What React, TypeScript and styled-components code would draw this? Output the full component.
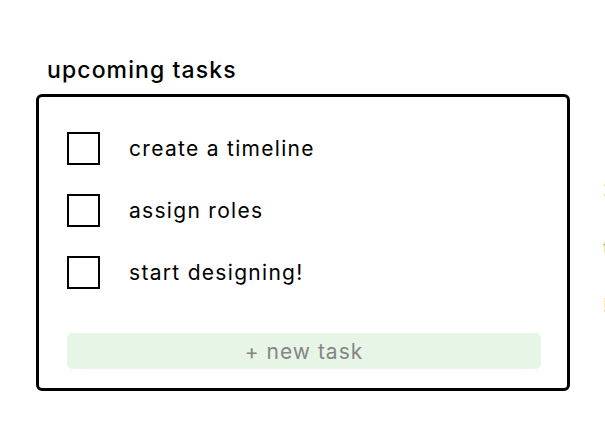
import React from "react";
import styled, { createGlobalStyle } from "styled-components";

const Global = createGlobalStyle`
  html, body { margin: 0; padding: 0; background: #fff; overflow: hidden; }
  body { font-family: "Inter", "Noto Sans", sans-serif; color: #000; }
`;

const Page = styled.div`
  display: flex;
  align-items: flex-start;
  padding: 54px 0 0 36px;
  width: 605px;
  height: 445px;
  box-sizing: border-box;
  overflow: hidden;
`;

const Column = styled.div`
  display: flex;
  flex-direction: column;
  flex-shrink: 0;
`;

const Title = styled.h2`
  margin: 0 0 8px 11px;
  font-size: 23px;
  font-weight: 500;
  line-height: 32px;
  letter-spacing: 1.1px;
`;

const Card = styled.div`
  width: 534px;
  height: 297px;
  box-sizing: border-box;
  border: 3px solid #000;
  border-radius: 6px;
  padding: 35px 26px 19px 28px;
  display: flex;
  flex-direction: column;
`;

const List = styled.div`
  display: flex;
  flex-direction: column;
  gap: 29px;
`;

const Row = styled.label`
  display: flex;
  align-items: center;
  gap: 29px;
  height: 33px;
`;

const Box = styled.span`
  width: 33px;
  height: 33px;
  box-sizing: border-box;
  border: 2px solid #000;
  flex-shrink: 0;
`;

const TaskText = styled.span`
  font-size: 21px;
  line-height: 33px;
  letter-spacing: 1.3px;
`;

const NewTask = styled.button`
  margin-top: auto;
  height: 36px;
  width: 474px;
  border: none;
  border-radius: 5px;
  background: #e7f5e7;
  color: #858585;
  font-family: inherit;
  font-size: 21px;
  letter-spacing: 1px;
  padding: 0;
  cursor: pointer;
`;

const Side = styled.div`
  margin-left: 33px;
  padding-top: 124px;
  display: flex;
  flex-direction: column;
  gap: 34px;
  flex-shrink: 0;
`;

const SideItem = styled.span`
  color: #86c686;
  font-size: 18px;
  line-height: 24px;
  white-space: nowrap;
`;

const tasks = ["create a timeline", "assign roles", "start designing!"];

export default function App() {
  return (
    <>
      <Global />
      <Page>
        <Column>
          <Title>upcoming tasks</Title>
          <Card>
            <List>
              {tasks.map((t) => (
                <Row key={t}>
                  <Box />
                  <TaskText>{t}</TaskText>
                </Row>
              ))}
            </List>
            <NewTask>+ new task</NewTask>
          </Card>
        </Column>
        <Side>
          <SideItem>2 days</SideItem>
          <SideItem>today</SideItem>
          <SideItem>!</SideItem>
        </Side>
      </Page>
    </>
  );
}
